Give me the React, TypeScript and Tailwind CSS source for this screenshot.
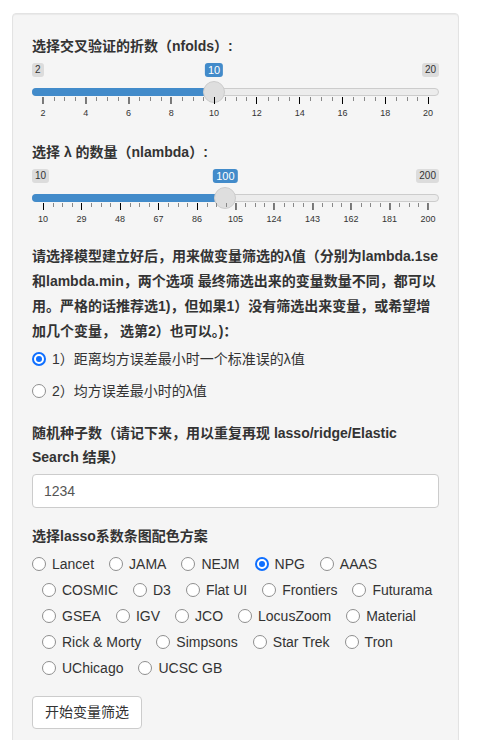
import React from "react";

const palettes = [
  ["Lancet", "JAMA", "NEJM", "NPG", "AAAS"],
  ["COSMIC", "D3", "Flat UI", "Frontiers", "Futurama"],
  ["GSEA", "IGV", "JCO", "LocusZoom", "Material"],
  ["Rick & Morty", "Simpsons", "Star Trek", "Tron"],
  ["UChicago", "UCSC GB"],
];

// 把手 22px，行程两端各留 11px
const at = (f: number) => `calc(11px + (100% - 22px) * ${f})`;

function Slider({ min, max, value, ticks }: { min: number; max: number; value: number; ticks: number[] }) {
  const f = (value - min) / (max - min);
  const n = ticks.length - 1;
  const minors: number[] = [];
  for (let i = 0; i < n; i++) for (let k = 1; k <= 3; k++) minors.push((i + k / 4) / n);

  return (
    <div className="mt-[7px]">
      <div className="relative flex h-[14px] justify-between">
        <span className="rounded-[3px] bg-black/10 px-[3px] py-[1px] text-[10px] leading-[12px] text-[#333]">{min}</span>
        <span className="rounded-[3px] bg-black/10 px-[3px] py-[1px] text-[10px] leading-[12px] text-[#333]">{max}</span>
        <span
          className="absolute top-0 -translate-x-1/2 rounded-[3px] bg-[#428bca] px-[3px] py-[1px] text-[11px] leading-[12px] text-white"
          style={{ left: at(f) }}
        >
          {value}
        </span>
      </div>

      <div className="relative mt-[11px] h-[8px] rounded-full border border-[#ccc] bg-[#ececec]">
        <div className="-mx-px -my-px h-[8px] rounded-l-full bg-[#428bca]" style={{ width: at(f) }} />
        <span
          className="absolute top-[-8px] h-[22px] w-[22px] -translate-x-1/2 rounded-full border border-[#ccc] bg-[#dedede]"
          style={{ left: at(f) }}
        />
      </div>

      <div className="relative mt-[1px] h-[21px]">
        {minors.map((m, i) => (
          <span key={i} className="absolute top-0 h-[4px] w-px bg-[#888]" style={{ left: at(m) }} />
        ))}
        {ticks.map((t, i) => (
          <div
            key={t}
            className="absolute top-0 flex -translate-x-1/2 flex-col items-center"
            style={{ left: at(i / n) }}
          >
            <span className="h-[7px] w-px bg-black" />
            <span className="mt-[4px] text-[9px] leading-[10px] text-[#333]">{t}</span>
          </div>
        ))}
      </div>
    </div>
  );
}

function Dot({ checked }: { checked?: boolean }) {
  return checked ? (
    <span className="flex h-[14px] w-[14px] shrink-0 items-center justify-center rounded-full border-2 border-[#0f6fff] bg-white">
      <span className="h-[6px] w-[6px] rounded-full bg-[#0f6fff]" />
    </span>
  ) : (
    <span className="h-[14px] w-[14px] shrink-0 rounded-full border border-[#8f8f8f] bg-white" />
  );
}

export default function App() {
  return (
    <div className="min-h-[740px] bg-white px-[12px] pt-[13px] font-['Liberation_Sans','Noto_Sans_CJK_SC',sans-serif] text-[14px] text-[#333]">
      <div className="w-[447px] rounded-[4px] border border-[#e3e3e3] bg-[#f5f5f5] px-[19px] pb-[20px] pt-[22px] shadow-[inset_0_1px_1px_rgba(0,0,0,0.05)]">
        <label className="block font-bold leading-[20px]">选择交叉验证的折数（nfolds）:</label>
        <Slider min={2} max={20} value={10} ticks={[2, 4, 6, 8, 10, 12, 14, 16, 18, 20]} />

        <label className="mt-[24px] block font-bold leading-[20px]">选择 λ 的数量（nlambda）:</label>
        <Slider min={10} max={200} value={100} ticks={[10, 29, 48, 67, 86, 105, 124, 143, 162, 181, 200]} />

        <p className="mt-[20px] whitespace-nowrap font-bold leading-[25px]">
          请选择模型建立好后，用来做变量筛选的λ值（分别为lambda.1se
          <br />
          和lambda.min，两个选项 最终筛选出来的变量数量不同，都可以
          <br />
          用。严格的话推荐选1)，但如果1）没有筛选出来变量，或希望增
          <br />
          加几个变量， 选第2）也可以。)：
        </p>
        <div className="mt-[5px] flex flex-col gap-[12px]">
          <div className="flex h-[20px] items-center gap-[6px]">
            <Dot checked />
            <span>1）距离均方误差最小时一个标准误的λ值</span>
          </div>
          <div className="flex h-[20px] items-center gap-[6px]">
            <Dot />
            <span>2）均方误差最小时的λ值</span>
          </div>
        </div>

        <label className="mt-[20px] block font-bold leading-[24px]">
          随机种子数（请记下来，用以重复再现 lasso/ridge/Elastic
          <br />
          Search 结果）
        </label>
        <input
          readOnly
          value="1234"
          className="mt-[5px] block h-[34px] w-full rounded-[4px] border border-[#ccc] bg-white px-[11px] text-[14px] text-[#555] outline-none"
        />

        <label className="mt-[18px] block font-bold leading-[20px]">选择lasso系数条图配色方案</label>
        <div className="mt-[8px] flex flex-col gap-[6px]">
          {palettes.map((row, r) => (
            <div key={r} className={`flex h-[20px] items-center ${r > 0 ? "pl-[10px]" : ""}`}>
              {row.map((p, i) => (
                <div key={p} className={`flex items-center gap-[6px] ${i > 0 ? "ml-[15px]" : ""}`}>
                  <Dot checked={p === "NPG"} />
                  <span className="whitespace-nowrap">{p}</span>
                </div>
              ))}
            </div>
          ))}
        </div>

        <button className="mt-[18px] block h-[33px] rounded-[4px] border border-[#ccc] bg-white px-[12px] text-[14px] text-[#333]">
          开始变量筛选
        </button>
      </div>
    </div>
  );
}
